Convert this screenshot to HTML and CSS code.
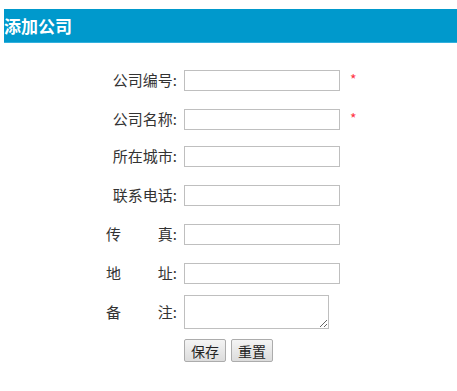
FILE: index.html
```html
<!DOCTYPE html>
<html lang="zh-CN">
<head>
    <meta charset="UTF-8">
    <title>添加公司</title>
    <link rel="stylesheet" href="styles.css">
</head>
<body>
    <div class="page-title">添加公司</div>

    <form class="company-form">
        <div class="form-row">
            <label class="form-label">公司编号:</label>
            <input type="text" class="form-input">
            <span class="required">*</span>
        </div>
        <div class="form-row">
            <label class="form-label">公司名称:</label>
            <input type="text" class="form-input">
            <span class="required">*</span>
        </div>
        <div class="form-row">
            <label class="form-label">所在城市:</label>
            <input type="text" class="form-input">
        </div>
        <div class="form-row">
            <label class="form-label">联系电话:</label>
            <input type="text" class="form-input">
        </div>
        <div class="form-row">
            <label class="form-label spread"><span>传</span><span>真:</span></label>
            <input type="text" class="form-input">
        </div>
        <div class="form-row">
            <label class="form-label spread"><span>地</span><span>址:</span></label>
            <input type="text" class="form-input">
        </div>
        <div class="form-row memo-row">
            <label class="form-label spread"><span>备</span><span>注:</span></label>
            <textarea class="form-memo"></textarea>
        </div>
        <div class="form-actions">
            <button type="button" class="btn">保存</button>
            <button type="reset" class="btn">重置</button>
        </div>
    </form>
</body>
</html>
```

FILE: styles.css
```css
* {
    box-sizing: border-box;
}

body {
    margin: 0;
    padding: 9px 0 0 4px;
    font-family: "Microsoft YaHei", "Noto Sans CJK SC", sans-serif;
    font-size: 15px;
    color: #333;
    background: #fff;
}

.page-title {
    height: 34px;
    line-height: 34px;
    background-color: #0099cc;
    border-bottom: 1px solid #33b0dd;
    color: #fff;
    font-size: 17px;
    font-weight: bold;
}

.company-form {
    padding: 27px 0 0 102px;
}

.form-row {
    display: flex;
    align-items: center;
    height: 21px;
    margin-bottom: 18px;
}

.form-row:nth-child(2) {
    margin-bottom: 16px;
}

.form-label {
    width: 71px;
    margin-right: 7px;
    margin-top: -2px;
    text-align: right;
    white-space: nowrap;
}

.form-label.spread {
    display: flex;
    justify-content: space-between;
}

.form-input {
    width: 156px;
    height: 21px;
    border: 1px solid #bfbfbf;
    padding: 0 3px;
    font-size: 13px;
    font-family: inherit;
}

.required {
    color: #ff3344;
    font-size: 14px;
    margin-left: 10px;
    margin-top: -4px;
    line-height: 1;
}

.memo-row {
    height: 34px;
    margin-top: -7px;
    margin-bottom: 10px;
}

.form-memo {
    width: 145px;
    height: 34px;
    border: 1px solid #bfbfbf;
    resize: both;
    font-family: inherit;
}

.form-actions {
    display: flex;
    gap: 5px;
    padding-left: 78px;
}

.btn {
    width: 42px;
    height: 23px;
    padding: 0;
    font-family: inherit;
    font-size: 14px;
    color: #222;
    background: linear-gradient(#f4f4f4, #dcdcdc);
    border: 1px solid #acacac;
    border-radius: 2px;
}
```
